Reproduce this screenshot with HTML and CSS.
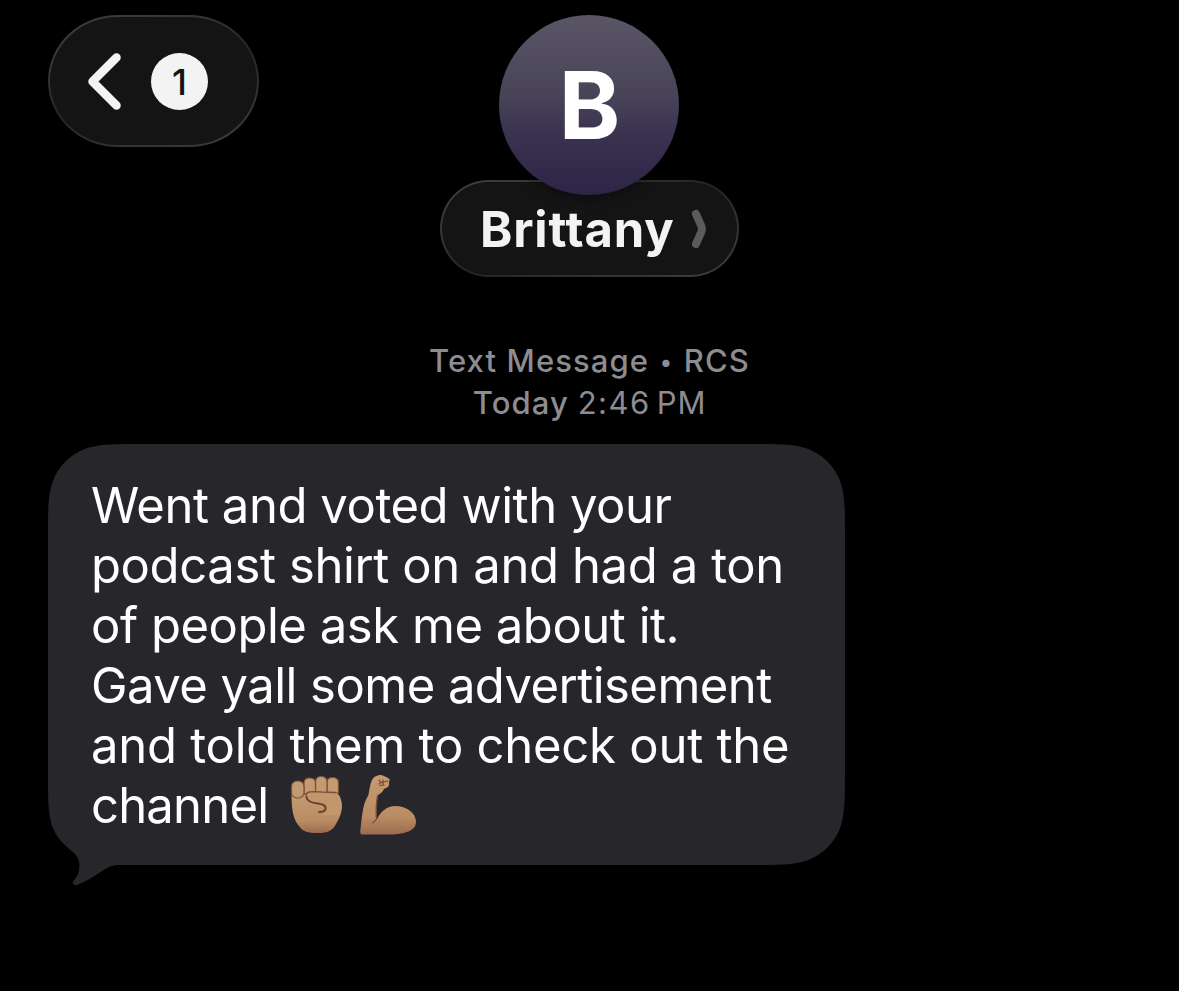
FILE: index.html
```
<!DOCTYPE html>
<html lang="en">
<head>
    <meta charset="UTF-8">
    <meta name="viewport" content="width=device-width, initial-scale=1.0">
    <title>Brittany</title>
    <link rel="stylesheet" href="styles.css">
</head>
<body>
    <header class="header">
        <div class="back glass">
            <svg class="back-arrow" width="34" height="58" viewBox="0 0 34 58">
                <path d="M28.500 5.500 L4.500 29.500 L28.500 53.500"/>
            </svg>
            <span class="unread">1</span>
        </div>
        <div class="contact">
            <div class="avatar">B</div>
            <div class="name glass">
                <span class="name-text">Brittany</span>
                <svg class="name-arrow" width="18" height="40" viewBox="0 0 18 40">
                    <path d="M5 5 L10.300 17 Q11.500 20 10.300 23 L5 35"/>
                </svg>
            </div>
        </div>
    </header>

    <main class="thread">
        <div class="meta">
            <p class="meta-type">Text Message <span class="dot">•</span> RCS</p>
            <p class="meta-time"><b>Today</b> <span class="clock">2:46</span><span class="period">PM</span></p>
        </div>

        <div class="bubble">
            <svg class="bubble-shape" width="797" height="442" viewBox="0 0 797 442">
                <path d="M91.7 0 H705.3 C731.7 0 744.9 0 759.1 4.5 C774.6 10.1 786.9 22.4 792.5 37.9 C797 52.1 797 65.3 797 91.7 V329.3 C797 355.7 797 368.9 792.5 383.1 C786.9 398.6 774.6 410.9 759.1 416.5 C744.9 421 731.7 421 705.3 421 H72 C65 421 61 422.500 55 426.500 C47 432 38 437.500 29 441 C26 442 23.500 439 25.500 437 C29.500 433 31.300 428 31.500 422 C31.500 415 28 410.500 23.500 407 C14 399.500 8 392 4.500 383.100 C0 368.900 0 355.700 0 329.300 V91.700 C0 65.300 0 52.100 4.500 37.900 C10.100 22.400 22.400 10.100 37.900 4.500 C52.100 0 65.300 0 91.700 0 Z"/>
            </svg>
            <p class="message">
                <span class="line l1">Went and voted with your</span>
                <span class="line l2">podcast shirt on and had a ton</span>
                <span class="line l3">of people ask me about it.</span>
                <span class="line l4">Gave yall some advertisement</span>
                <span class="line l5">and told them to check out the</span>
                <span class="line l6">channel
                    <svg class="emoji" width="132" height="64" viewBox="0 0 132 64" role="img" aria-label="raised fist, flexed biceps">
                        <defs>
                            <linearGradient id="skin" x1="0" y1="0" x2="0" y2="1">
                                <stop offset="0" stop-color="#c69b70"/>
                                <stop offset="0.7" stop-color="#ba8c64"/>
                                <stop offset="1" stop-color="#9c6a50"/>
                            </linearGradient>
                        </defs>
                        <!-- fist -->
                        <path fill="url(#skin)" d="M3.500 20 C3.500 36 5 46 11 53 C15 59 20 60 29 60 C38 60 44 59 48 51 C51 46 54 40 54 33 C54 27 51 22 46 19 Z"/>
                        <g fill="#c49a70" stroke="#7b5039" stroke-width="1.200">
                            <path d="M39 20 V9 Q39 4.500 44.500 4.500 Q50.500 4.500 50.500 10 V20 Z"/>
                            <path d="M27.500 20 V9 Q27.500 3.500 33 3.500 Q39 3.500 39 9 V20 Z"/>
                            <path d="M16 21 V10 Q16 5 21.500 5 Q27.500 5 27.500 10 V20 Z"/>
                            <rect x="3.500" y="8" width="12.500" height="17" rx="5.500"/>
                        </g>
                        <path fill="#c3966c" d="M18 23 C18 18 24 18.500 33 19 L48 19.500 C54 23 55 32 51 42 L36 42 L36 36 C26 34 18 30 18 23 Z"/>
                        <path fill="none" stroke="#7b5039" stroke-width="1.300" stroke-linecap="round" d="M18 23 C18 18 24 18.500 33 19 L48 19.500"/>
                        <path fill="none" stroke="#65412f" stroke-width="2" stroke-linecap="round" d="M18.500 24 C19 28 24 30 30 30.500 C34 31 38 32 37.500 36 C37 38 35 39 31 39"/>
                        <!-- biceps -->
                        <path fill="url(#skin)" d="M82 14 C83 8 85 3 90 2.500 C94 1 97 4 100 5 C103 7 101 8 101 10 C102 13 99 15 96 16 C95 19 92 21 90 22 C88 30 88 39 88.500 47 C93 38 99 33 107 33 C119 33 128 40 128 49 C128 58 116 61 103 61.500 H75 C72 62 72 59 72.500 56 C74 46 74 32 80 23 C81 20 81 17 82 14 Z"/>
                        <path fill="none" stroke="#76503b" stroke-width="1.300" stroke-linecap="round" d="M89.500 23 C87.500 33 88 40 88.500 46 C87.500 48 86 49 84.500 50"/>
                        <path fill="none" stroke="#704831" stroke-width="1.200" stroke-linecap="round" d="M91 7 L93 9.500 L91 11 M95 7 V11 M93 9.500 L100 8 M92 12.500 L96 12"/>
                    </svg>
                </span>
            </p>
        </div>
    </main>
</body>
</html>
```
FILE: styles.css
```
* {
    margin: 0;
    padding: 0;
    box-sizing: border-box;
}

body {
    min-height: 100vh;
    background-color: #000;
    color: #fff;
    font-family: Inter, "Liberation Sans", sans-serif;
    overflow: hidden;
}

svg {
    display: block;
    flex-shrink: 0;
}

.header {
    display: grid;
    grid-template-columns: 1fr auto 1fr;
    align-items: start;
    padding: 15px 48px 0;
}

/* dark pill with a thin light edge */
.glass {
    border: 2px solid transparent;
    background:
        linear-gradient(#141414, #141414) padding-box,
        linear-gradient(160deg, #3e3e3e 0%, #343434 30%, #242424 50%, #303030 70%, #3e3e3e 100%) border-box;
}

.back {
    width: 211px;
    height: 132px;
    border-radius: 70px / 66px;
    display: flex;
    align-items: center;
    gap: 29px;
    padding-left: 38px;
}

.back-arrow {
    fill: none;
    stroke: #f3f3f3;
    stroke-width: 8.5;
    stroke-linecap: round;
    stroke-linejoin: round;
}

.unread {
    width: 57px;
    height: 57px;
    border-radius: 50%;
    background-color: #f3f3f3;
    color: #141414;
    font-size: 36px;
    font-weight: 500;
    line-height: 58px;
    text-align: center;
}

.contact {
    display: flex;
    flex-direction: column;
    align-items: center;
}

.avatar {
    width: 180px;
    height: 180px;
    margin-right: 1px;
    border-radius: 50%;
    background: linear-gradient(#5a5666 0%, #484357 45%, #3b3350 65%, #2d2447 100%);
    box-shadow: 0 3px 12px rgba(0, 0, 0, 0.4);
    font-size: 93px;
    font-weight: 700;
    line-height: 181px;
    text-align: center;
    text-indent: 1px;
    z-index: 1;
}

.name {
    width: 299px;
    height: 97px;
    margin-top: -15px;
    border-radius: 48.5px;
    display: flex;
    align-items: center;
    gap: 16px;
    padding-left: 38px;
}

.name-text {
    width: 195px;
    padding-top: 1px;
    color: #f3f3f3;
    font-size: 49px;
    font-weight: 700;
    letter-spacing: 0.8px;
    white-space: nowrap;
}

.name-arrow {
    fill: none;
    stroke: #5b5b5b;
    stroke-width: 8;
    stroke-linecap: round;
}

.thread {
    padding: 63px 48px 0;
}

.meta {
    color: #8d8c93;
    font-size: 31px;
    line-height: 42px;
    text-align: center;
    white-space: nowrap;
}

.meta-type,
.meta-time b {
    font-weight: 500;
    letter-spacing: 1.1px;
}

.dot {
    display: inline-block;
    width: 16px;
    font-size: 23px;
    line-height: 1;
    vertical-align: 2px;
}

.clock {
    letter-spacing: 1.5px;
}

.period {
    margin-left: 6px;
    letter-spacing: 0.8px;
}

.bubble {
    position: relative;
    width: 797px;
    height: 421px;
    margin-top: 20px;
    padding: 32px 43px;
}

.bubble-shape {
    position: absolute;
    top: 0;
    left: 0;
    fill: #27262b;
}

.message {
    position: relative;
    font-size: 49px;
    line-height: 60px;
}

.line {
    display: flex;
    height: 60px;
    white-space: nowrap;
}

.l1 { letter-spacing: -0.45px; }
.l2 { letter-spacing: -0.39px; }
.l3 { letter-spacing: -0.47px; }
.l4 { letter-spacing: -0.55px; }
.l5 { letter-spacing: -0.25px; }
.l6 { letter-spacing: -0.8px; }

.emoji {
    margin: -3px 0 0 20px;
}
```
